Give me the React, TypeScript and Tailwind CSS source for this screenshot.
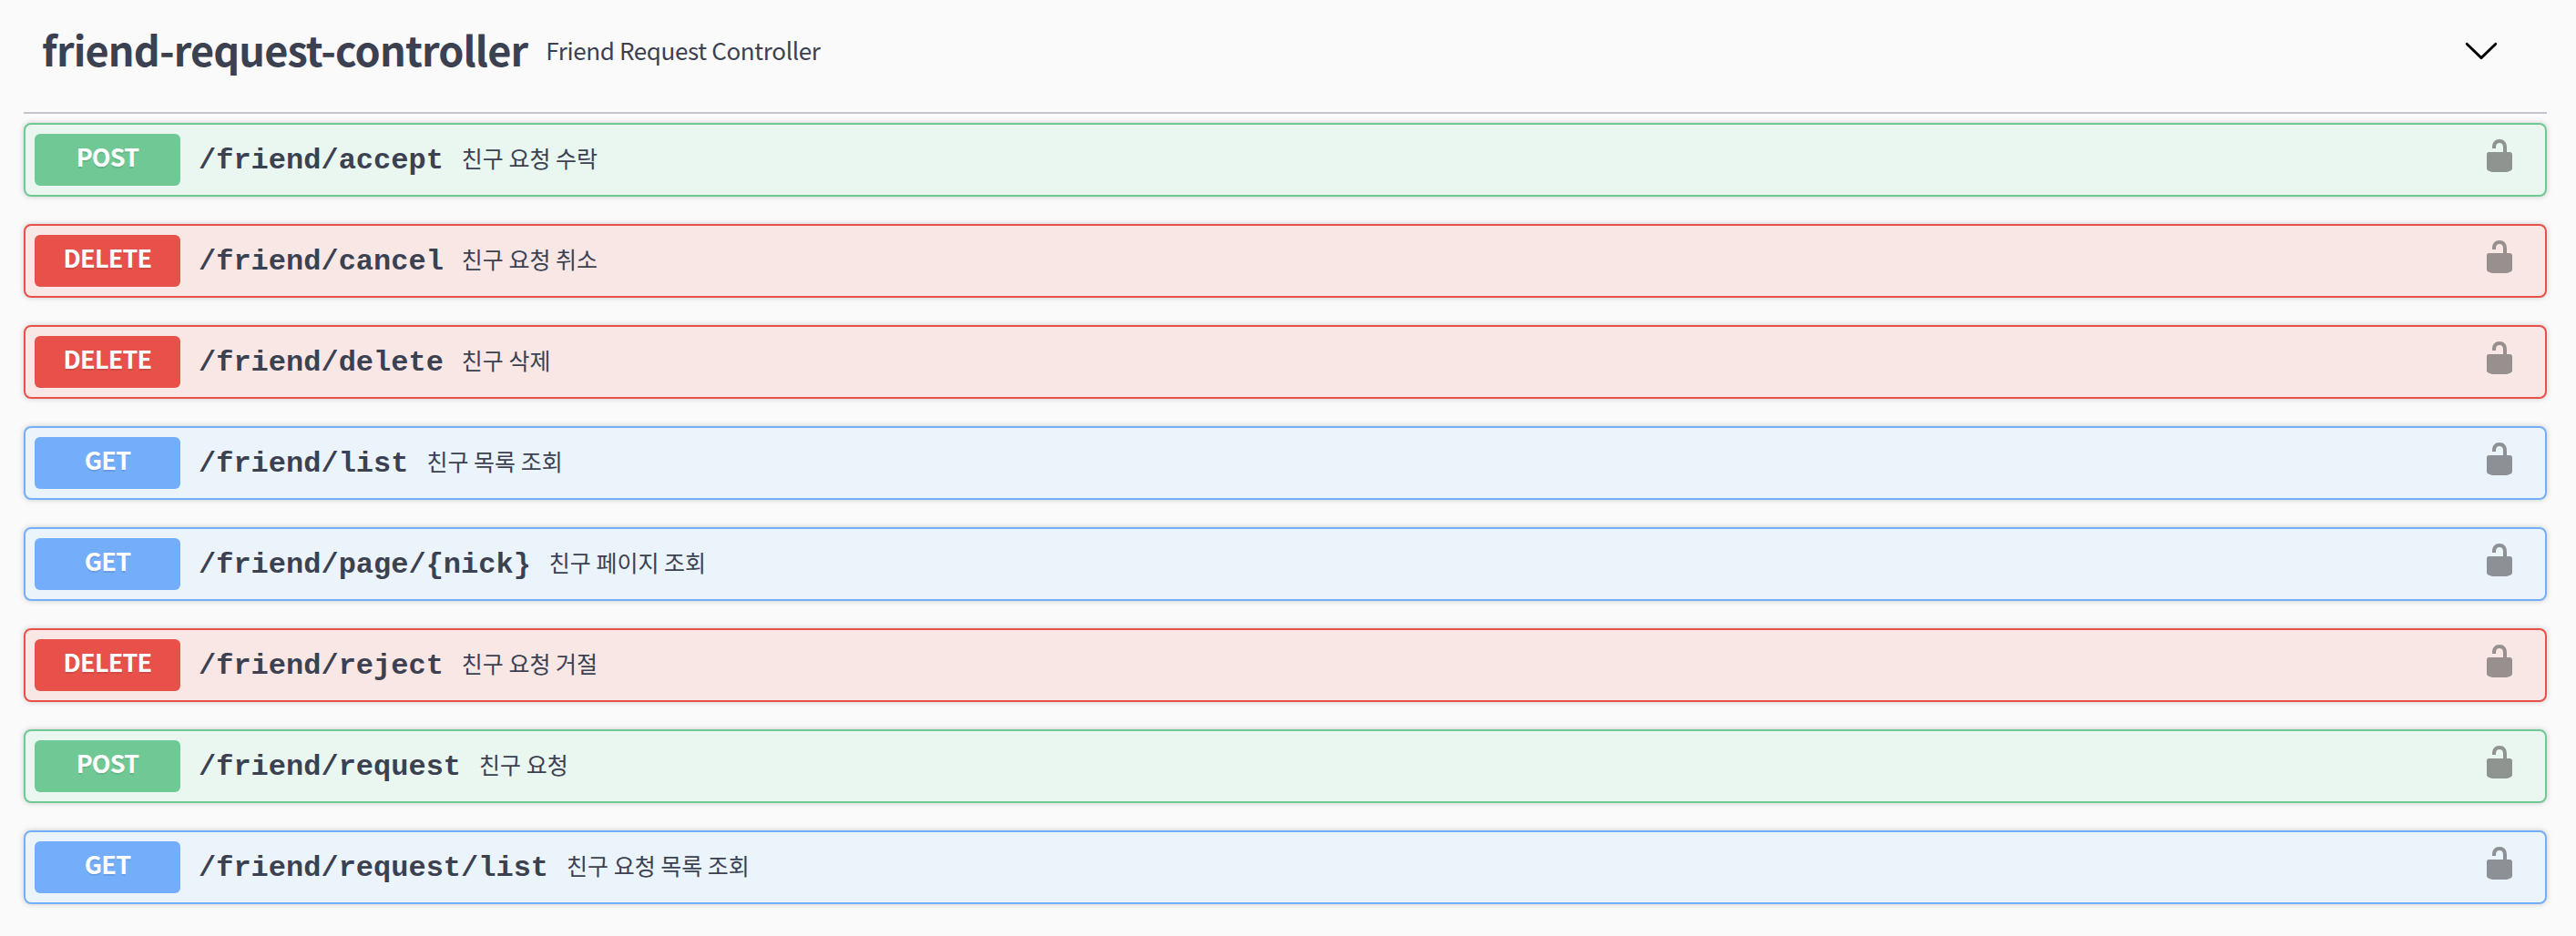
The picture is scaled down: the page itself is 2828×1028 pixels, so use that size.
const methods = {
  POST: { row: "border-[#70c995] bg-[#eaf6f0]", badge: "bg-[#70c995]", lock: "fill-[#8f9490]" },
  DELETE: { row: "border-[#e8504a] bg-[#f9e7e6]", badge: "bg-[#e8504a]", lock: "fill-[#97908f]" },
  GET: { row: "border-[#74aefb] bg-[#ebf3fb]", badge: "bg-[#74aefb]", lock: "fill-[#8d9196]" },
};

const rows: { m: keyof typeof methods; path: string; desc: string }[] = [
  { m: "POST", path: "/friend/accept", desc: "친구 요청 수락" },
  { m: "DELETE", path: "/friend/cancel", desc: "친구 요청 취소" },
  { m: "DELETE", path: "/friend/delete", desc: "친구 삭제" },
  { m: "GET", path: "/friend/list", desc: "친구 목록 조회" },
  { m: "GET", path: "/friend/page/{nick}", desc: "친구 페이지 조회" },
  { m: "DELETE", path: "/friend/reject", desc: "친구 요청 거절" },
  { m: "POST", path: "/friend/request", desc: "친구 요청" },
  { m: "GET", path: "/friend/request/list", desc: "친구 요청 목록 조회" },
];

function Unlock({ className }: { className: string }) {
  return (
    <svg viewBox="0 0 20 20" className={`w-10 h-10 shrink-0 mr-5 -mt-[9px] ${className}`}>
      <path d="M15.8 8H14V5.6C14 2.703 12.665 1 10 1 7.334 1 6 2.703 6 5.6V6h2v-.801C8 3.754 8.797 3 10 3c1.203 0 2 .754 2 2.199V8H4c-.553 0-1 .646-1 1.199V17c0 .549.428 1.139.951 1.307l1.197.387C5.672 18.861 6.55 19 7.1 19h5.8c.549 0 1.428-.139 1.951-.307l1.196-.387c.524-.167.953-.757.953-1.306V9.199C17 8.646 16.352 8 15.8 8z" />
    </svg>
  );
}

export default function App() {
  return (
    <div className="min-h-[1028px] bg-[#fafafa] pl-[26px] pr-[32px] text-[#3b4151] font-['Noto_Sans_CJK_KR',sans-serif]">
      <div className="h-[125px] flex items-center border-b-2 border-[#c5c5cd] pl-5 pr-[52px]">
        <h3 className="text-[45px] tracking-[-0.85px] font-semibold leading-none -mt-[16px]">friend-request-controller</h3>
        <span className="text-[26px] tracking-[-0.36px] leading-none ml-5 -mt-[14px] flex-1">Friend Request Controller</span>
        <svg viewBox="0 0 20 20" className="w-10 h-10 fill-black -mt-[14px]">
          <path d="M17.418 6.109c.272-.268.709-.268.979 0s.271.701 0 .969l-7.908 7.83c-.27.268-.707.268-.979 0l-7.908-7.83c-.27-.268-.27-.701 0-.969.271-.268.709-.268.979 0L10 13.25l7.418-7.141z" />
        </svg>
      </div>
      <div className="pt-[10px] flex flex-col gap-[30px]">
        {rows.map((r) => (
          <div
            key={r.path}
            className={`h-[81px] flex items-center border-2 rounded-lg px-[10px] shadow-[0_0_6px_rgba(0,0,0,0.19)] ${methods[r.m].row}`}
          >
            <span className={`w-40 h-[57px] shrink-0 rounded-md flex items-center justify-center text-white text-[27px] tracking-[-0.8px] font-bold [text-shadow:0_2px_0_rgba(0,0,0,0.1)] ${methods[r.m].badge}`}>
              <span className="-mt-[6px]">{r.m}</span>
            </span>
            <span className="ml-5 mt-[3px] font-['Liberation_Mono','Noto_Sans_CJK_KR',monospace] text-[32px] font-bold leading-none">{r.path}</span>
            <span className="ml-5 flex-1 text-[25px] leading-none -mt-[4px]">{r.desc}</span>
            <Unlock className={methods[r.m].lock} />
          </div>
        ))}
      </div>
    </div>
  );
}
